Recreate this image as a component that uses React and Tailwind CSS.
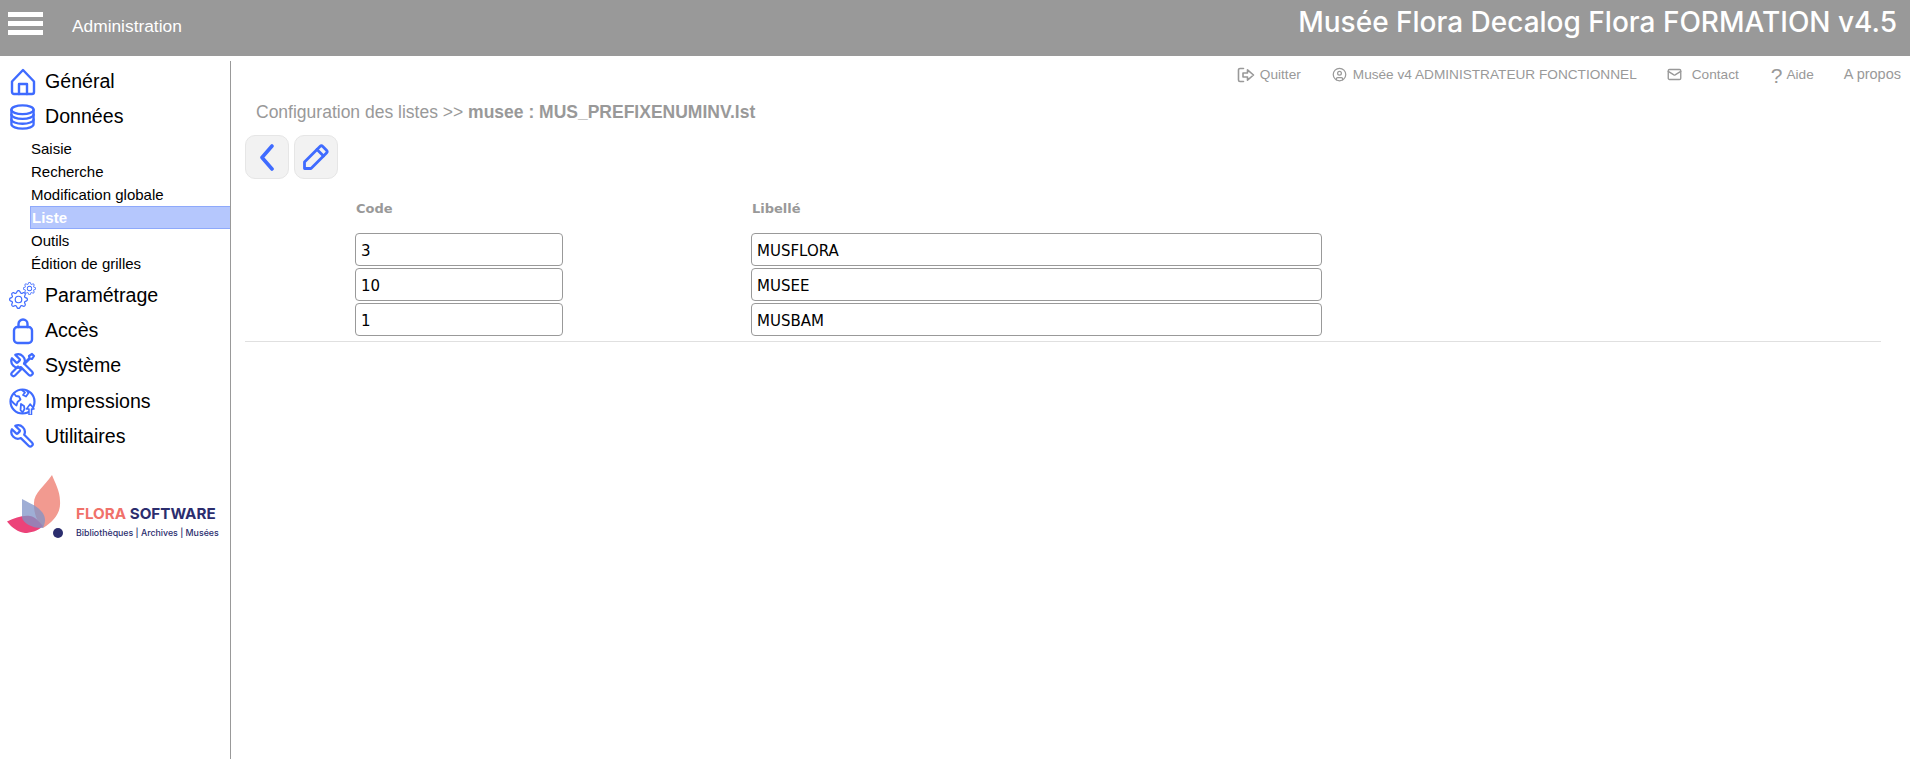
import React from 'react';
import { CircleUser, Mail } from 'lucide-react';
import { BsGear } from 'react-icons/bs';

const blue = 'text-[#3f6bff]';
const wrenchPath = 'M14.7 6.3a1 1 0 0 0 0 1.4l1.6 1.6a1 1 0 0 0 1.4 0l3.77-3.77a6 6 0 0 1-7.94 7.94l-6.91 6.91a2.12 2.12 0 0 1-3-3l6.91-6.91a6 6 0 0 1 7.94-7.94l-3.76 3.76z';

function Line({ w = 26, h = 26, sw = 2.4, children }) {
  return (
    <svg width={w} height={h} viewBox={`0 0 ${w} ${h}`} fill="none" stroke="currentColor" strokeWidth={sw} strokeLinecap="round" strokeLinejoin="round">
      {children}
    </svg>
  );
}

function HomeIcon() {
  return (
    <Line w={26} h={28}>
      <path d="M2 13.5 13 2l11 11.5V24a2 2 0 0 1-2 2H4a2 2 0 0 1-2-2Z" />
      <path d="M9 26V16h8v10" />
    </Line>
  );
}

function DbIcon() {
  return (
    <Line w={28} h={28}>
      <ellipse cx="14" cy="6.5" rx="11.5" ry="4.5" />
      <path d="M2.5 6.5v15c0 2.5 5.2 4.5 11.5 4.5s11.5-2 11.5-4.5v-15" />
      <path d="M2.5 11.5c0 2.5 5.2 4.5 11.5 4.5s11.5-2 11.5-4.5" />
      <path d="M2.5 16.5c0 2.5 5.2 4.5 11.5 4.5s11.5-2 11.5-4.5" />
    </Line>
  );
}

function CogsIcon() {
  return (
    <span className="relative block w-[27px] h-[27px]">
      <BsGear size={19} className={`absolute left-0 bottom-0 ${blue}`} />
      <BsGear size={13} className={`absolute right-0 top-0 ${blue}`} />
    </span>
  );
}

function LockIcon() {
  return (
    <Line w={22} h={28}>
      <rect x="2" y="10" width="18" height="16" rx="3.5" />
      <path d="M6.5 10V7a4.5 4.5 0 0 1 9 0v3" />
    </Line>
  );
}

function ToolsIcon() {
  return (
    <Line w={27} h={27} sw={2.2}>
      <g transform="translate(27 0) scale(-1.12 1.12)">
        <path d={wrenchPath} strokeWidth="2" />
      </g>
      <path d="M3 20.5 9 14.5l3 3-6 6a2.1 2.1 0 0 1-3-3Z" />
      <path d="M15 11.5 20.5 6l-.5-2 3-2 2 2-2 3-2-.5-5 5" />
    </Line>
  );
}

function GlobeIcon() {
  return (
    <Line w={27} h={27} sw={2.2}>
      <circle cx="13.5" cy="13.5" r="12" />
      <path d="M5 5.5 7 8l3 .5 1.5 3-3 2.5-1 3.5-2.5-2-3-3" strokeWidth="1.8" />
      <path d="M13 2l3 2.5-2 2.5 3 1.5 2.5-3.5L18 3" strokeWidth="1.8" />
      <path d="M12 16l3 2 .5 3-2 3.5-2-2.5Z" strokeWidth="1.8" />
      <path d="M20 27v-6h-2.5l3.7-5 3.8 5H22.5v6Z" fill="white" strokeWidth="1.5" />
    </Line>
  );
}

function WrenchIcon() {
  return (
    <Line w={27} h={27} sw={2}>
      <g transform="translate(27 0) scale(-1.12 1.12)">
        <path d={wrenchPath} />
      </g>
    </Line>
  );
}

function MainItem({ icon, label, className = 'h-[35px]' }) {
  return (
    <div className={`flex items-center pl-[9px] ${className}`}>
      <span className={`w-[27px] flex justify-center ${blue}`}>{icon}</span>
      <span className="ml-[9px] text-[19.6px] leading-none text-black">{label}</span>
    </div>
  );
}

function SubItem({ label, active }) {
  return (
    <div
      className={
        active
          ? 'h-[23px] leading-[21px] ml-[30px] pl-px text-[15px] font-bold text-white bg-[#b5c7fd] border border-[#8ea9fb] border-r-0'
          : 'h-[23px] leading-[23px] ml-[31px] text-[15px] text-black'
      }
    >
      {label}
    </div>
  );
}

function FloraLogo() {
  return (
    <div className="flex items-end mt-[17px] h-[72px]">
      <svg width="70" height="72" viewBox="0 0 70 72" className="shrink-0">
        <path d="M52 4C44 16 33 22 34 34c0 10 4 18 9 23 11-7 18-15 17-27C60 20 55 12 52 4Z" fill="#f29a90" />
        <path d="M7 50.5C15 47 22 44 30 45c6 1 10 7 13 10-5 5-13 7-18 7-7-1-13-5-18-11.5Z" fill="#ec4379" />
        <path d="M22 28v18c0 6 12 12 21 11 4-9 2-14-5-20-5-4-11-6-16-9Z" fill="#7f93c7" fillOpacity="0.75" />
        <circle cx="58" cy="62" r="5" fill="#2b2d6e" />
      </svg>
      <div className="ml-[6px] -mb-px">
        <div className="font-['Inter',sans-serif] font-bold text-[15.2px] leading-[16px] whitespace-nowrap">
          <span className="text-[#f0716a]">FLORA</span> <span className="text-[#2b2d6e]">SOFTWARE</span>
        </div>
        <div className="font-['Inter',sans-serif] font-medium text-[8.8px] leading-[22px] text-[#2b2d6e] whitespace-nowrap">
          Bibliothèques | Archives | Musées
        </div>
      </div>
    </div>
  );
}

function Field({ value }) {
  return (
    <input
      readOnly
      value={value}
      className="w-full h-[33px] px-[5px] pt-[3px] border border-[#999] rounded-[4px] bg-white text-black text-[15px] font-['DejaVu_Sans',sans-serif] outline-none"
    />
  );
}

function ToolButton({ children }) {
  return (
    <button className="w-[44px] h-[44px] rounded-[10px] bg-[#f2f2f2] border border-[#e6e6e6] flex items-center justify-center text-[#3f6bff]">
      {children}
    </button>
  );
}

const rows = [
  ['3', 'MUSFLORA'],
  ['10', 'MUSEE'],
  ['1', 'MUSBAM'],
];

export default function App() {
  return (
    <div className="w-[1910px] h-[759px] overflow-hidden bg-white font-['Liberation_Sans',sans-serif] flex flex-col">
      <header className="h-[56px] shrink-0 bg-[#999] flex items-center text-white">
        <div className="ml-[8px] w-[35px] flex flex-col gap-[4px] -mt-[9px]">
          <span className="h-[5px] bg-white" />
          <span className="h-[5px] bg-white" />
          <span className="h-[5px] bg-white" />
        </div>
        <span className="ml-[29px] -mt-[2px] text-[17.33px]">Administration</span>
        <span className="ml-auto mr-[13px] -mt-[13px] text-[28px] font-medium font-['Inter',sans-serif] whitespace-nowrap">
          Musée Flora Decalog Flora FORMATION v4.5
        </span>
      </header>

      <div className="flex flex-1 min-h-0">
        <aside className="w-[231px] shrink-0 mt-[5px] pt-[3px] border-r border-[#999]">
          <MainItem icon={<HomeIcon />} label="Général" />
          <MainItem icon={<DbIcon />} label="Données" />
          <div className="pt-[3px] pb-[3px]">
            <SubItem label="Saisie" />
            <SubItem label="Recherche" />
            <SubItem label="Modification globale" />
            <SubItem label="Liste" active />
            <SubItem label="Outils" />
            <SubItem label="Édition de grilles" />
          </div>
          <MainItem icon={<CogsIcon />} label="Paramétrage" />
          <MainItem icon={<LockIcon />} label="Accès" />
          <MainItem icon={<ToolsIcon />} label="Système" />
          <MainItem icon={<GlobeIcon />} label="Impressions" className="h-[36px] pt-px" />
          <MainItem icon={<WrenchIcon />} label="Utilitaires" />
          <FloraLogo />
        </aside>

        <main className="flex-1 min-w-0 pl-[14px] pr-[29px]">
          <nav className="h-[38px] flex items-center justify-end gap-[30px] -mr-[20px] text-[13.65px] text-[#999]">
            <span className="flex items-center gap-[5px]">
              <svg width="18" height="16" viewBox="0 0 18 16" fill="none" stroke="currentColor" strokeWidth="1.6" strokeLinejoin="round" strokeLinecap="round">
                <path d="M6.5 1.5H3A1.5 1.5 0 0 0 1.5 3v10A1.5 1.5 0 0 0 3 14.5h3.5" />
                <path d="M6 6h4.5V2.800L16.5 8l-6 5.200V10H6Z" />
              </svg>
              Quitter
            </span>
            <span className="ml-px flex items-center gap-[6px]"><CircleUser size={15} />Musée v4 ADMINISTRATEUR FONCTIONNEL</span>
            <span className="flex items-center gap-[10px]"><Mail size={15} strokeWidth={2.2} />Contact</span>
            <span className="ml-[2px] flex items-center gap-[4px]"><span className="text-[21px] leading-none font-light">?</span>Aide</span>
            <span className="text-[14.5px]">A propos</span>
          </nav>
          <h1 className="ml-[11px] mt-[6px] text-[17.5px] leading-[24px] text-[#999] font-normal">
            Configuration des listes &gt;&gt; <b>musee : MUS_PREFIXENUMINV.lst</b>
          </h1>
          <div className="flex gap-[5px] mt-[11px]">
            <ToolButton>
              <svg width="14" height="27" viewBox="0 0 14 27" fill="none" stroke="currentColor" strokeWidth="3.6" strokeLinecap="round" strokeLinejoin="round">
                <path d="M12 2 2 13.5 12 25" />
              </svg>
            </ToolButton>
            <ToolButton>
              <Line w={28} h={28} sw={2.8}>
                <path d="M2.5 25.5V19L18 3.5a2 2 0 0 1 2.8 0l3.7 3.700a2 2 0 0 1 0 2.8L9 25.5Z" />
                <path d="M15 6.5 21.5 13" />
              </Line>
            </ToolButton>
          </div>
          <div className="grid grid-cols-[208px_571px] gap-x-[188px] ml-[110px] mt-[22px] font-['DejaVu_Sans',sans-serif] font-bold text-[13px] text-[#999] leading-[16px]">
            <span className="pl-px">Code</span>
            <span className="pl-px">Libellé</span>
          </div>
          <div className="mt-[16px] border-b border-[#e0e0e0] pb-[5px] flex flex-col gap-[2px]">
            {rows.map(([code, label]) => (
              <div key={code} className="grid grid-cols-[208px_571px] gap-x-[188px] ml-[110px]">
                <Field value={code} />
                <Field value={label} />
              </div>
            ))}
          </div>
        </main>
      </div>
    </div>
  );
}
